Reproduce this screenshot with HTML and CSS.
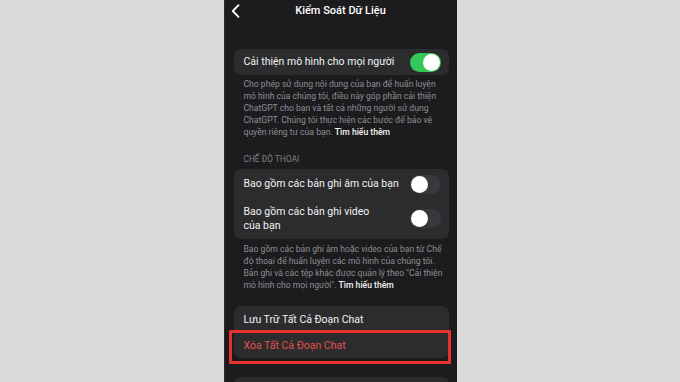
FILE: index.html
```html
<!DOCTYPE html>
<html lang="vi">
<head>
<meta charset="utf-8">
<link rel="stylesheet" href="styles.css">
</head>
<body>
<div class="phone">
  <div class="header">
    <svg class="back" width="9" height="14" viewBox="0 0 9 14"><path d="M7.5 1.2 L1.8 7 L7.5 12.8" fill="none" stroke="#fff" stroke-width="1.8" stroke-linecap="round" stroke-linejoin="round"/></svg>
    <div class="title">Kiểm Soát Dữ Liệu</div>
  </div>
  <div class="content">
    <div class="card card1">
      <div class="row row-single">
        <span class="label">Cải thiện mô hình cho mọi người</span>
        <span class="toggle on"><span class="knob"></span></span>
      </div>
    </div>
    <p class="desc desc1">Cho phép sử dụng nội dung của bạn để huấn luyện<br>mô hình của chúng tôi, điều này góp phần cải thiện<br>ChatGPT cho bạn và tất cả những người sử dụng<br>ChatGPT. Chúng tôi thực hiện các bước để bảo vệ<br>quyền riêng tư của bạn. <b>Tìm hiểu thêm</b></p>
    <div class="section">CHẾ ĐỘ THOẠI</div>
    <div class="card card2">
      <div class="row row-a">
        <span class="label">Bao gồm các bản ghi âm của bạn</span>
        <span class="toggle"><span class="knob"></span></span>
      </div>
      <div class="row row-b">
        <span class="label">Bao gồm các bản ghi video<br>của bạn</span>
        <span class="toggle"><span class="knob"></span></span>
      </div>
    </div>
    <p class="desc desc2">Bao gồm các bản ghi âm hoặc video của bạn từ Chế<br>độ thoại để huấn luyện các mô hình của chúng tôi.<br>Bản ghi và các tệp khác được quản lý theo "Cải thiện<br>mô hình cho mọi người". <b>Tìm hiểu thêm</b></p>
    <div class="card card3">
      <div class="row row-btn"><span class="label">Lưu Trữ Tất Cả Đoạn Chat</span></div>
      <div class="row row-btn danger"><span class="label red">Xóa Tất Cả Đoạn Chat</span></div>
    </div>
    <div class="card card4"></div>
  </div>
</div>
</body>
</html>
```
FILE: styles.css
```css
* { box-sizing: border-box; }
html, body { margin: 0; padding: 0; }
body {
  width: 680px;
  height: 382px;
  overflow: hidden;
  background: #d9d9d9;
  display: flex;
  justify-content: center;
  font-family: "Roboto", "Liberation Sans", sans-serif;
}
.phone {
  width: 233px;
  height: 382px;
  background: #1c1c1e;
  color: #fff;
  overflow: hidden;
  border-left: 1px solid #2a2a2a;
}
.header {
  position: relative;
  height: 24px;
  display: flex;
  align-items: center;
  justify-content: center;
}
.back {
  position: absolute;
  left: 6px;
  top: 4px;
}
.title {
  font-size: 11px;
  font-weight: 500;
  margin-top: -3px;
}
.content {
  padding: 0 8px 0 9px;
}
.card {
  background: #2c2c2e;
  border-radius: 7px;
}
.card1 { margin-top: 25px; }
.row {
  display: flex;
  align-items: center;
  justify-content: space-between;
  padding: 0 8px 0 10px;
  position: relative;
}
.row-single { height: 26px; }
.row-a { height: 29px; padding-top: 1px; }
.row-b { height: 41px; }
.label {
  font-size: 10.5px;
  line-height: 14px;
  color: #f2f2f2;
  white-space: nowrap;
}
.toggle {
  width: 31px;
  height: 19px;
  border-radius: 10px;
  background: #39393d;
  position: relative;
  flex: none;
}
.toggle .knob {
  position: absolute;
  top: 1px;
  left: 1px;
  width: 17px;
  height: 17px;
  border-radius: 50%;
  background: #fff;
}
.toggle.on { background: #34c759; }
.toggle.on .knob { left: 13px; }
.desc {
  margin: 3px 0 0;
  padding: 0 4px 0 10px;
  font-size: 8.6px;
  line-height: 12px;
  color: #8e8e93;
  white-space: nowrap;
}
.desc b { color: #f2f2f2; font-weight: 500; }
.section {
  margin-top: 15px;
  padding-left: 10px;
  font-size: 8.2px;
  line-height: 12px;
  color: #808085;
  letter-spacing: 0.1px;
}
.card2 { margin-top: 4px; }
.desc2 { margin-top: 4px; }
.card3 { margin-top: 15px; }
.row-btn { height: 26px; padding-top: 2px; }
.red { color: #e0534d; }
.danger::after {
  content: "";
  position: absolute;
  left: -5px;
  right: -2px;
  top: -2px;
  bottom: -6px;
  border: 3px solid #e8302f;
}
.card4 { margin-top: 19px; height: 30px; }
```
